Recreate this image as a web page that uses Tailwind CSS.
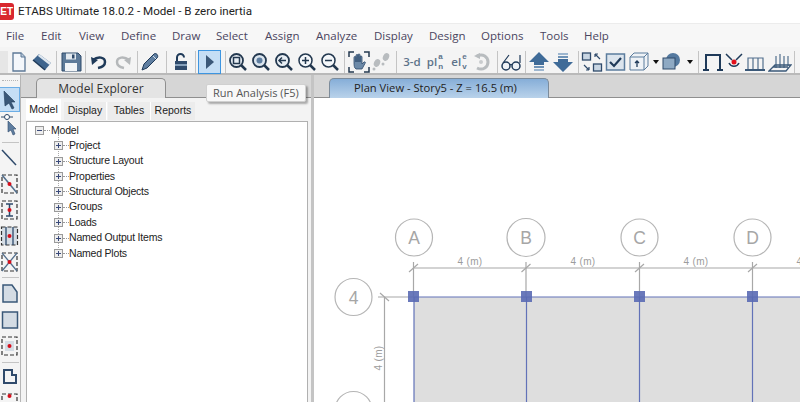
<!DOCTYPE html>
<html lang="en">
<head>
    <meta charset="UTF-8">
    <title>ETABS Ultimate 18.0.2</title>
    <script src="https://cdn.jsdelivr.net/npm/@tailwindcss/browser@4"></script>
</head>
<body class="w-[800px] h-[402px] overflow-hidden bg-white font-['Open_Sans',sans-serif] text-[#333]">
    <div class="relative flex flex-col h-[402px]">
        <!-- Title bar -->
        <div class="flex items-center h-[23px] bg-white shrink-0">
            <div class="flex items-center justify-end w-[14px] h-[17px] mr-[4px] pr-[1px] rounded-r-[3px] bg-[#d9272e] text-white text-[10px] font-bold font-['Liberation_Sans',sans-serif]">ET</div>
            <span class="text-[11.6px] text-[#222] leading-none font-['Roboto',sans-serif]">ETABS Ultimate 18.0.2 - Model - B zero inertia</span>
        </div>

        <!-- Menu bar -->
        <div class="flex items-center h-[24px] bg-[#f7f7f7] border-t border-[#ececec] shrink-0 text-[11.5px] text-[#4a4560]">
            <span class="ml-[6px] w-[35px]">File</span>
            <span class="w-[38px]">Edit</span>
            <span class="w-[42px]">View</span>
            <span class="w-[51px]">Define</span>
            <span class="w-[44px]">Draw</span>
            <span class="w-[49px]">Select</span>
            <span class="w-[51px]">Assign</span>
            <span class="w-[58px]">Analyze</span>
            <span class="w-[55px]">Display</span>
            <span class="w-[52px]">Design</span>
            <span class="w-[59px]">Options</span>
            <span class="w-[44px]">Tools</span>
            <span>Help</span>
        </div>

        <!-- Main toolbar -->
        <div class="flex items-center h-[28px] pt-[3px] bg-[#f4f4f4] border-b-2 border-[#b9b9b9] shrink-0">
            <div class="w-[8px] h-[22px] bg-[#e6e6e6]"></div>
            <svg class="w-[22px] h-[22px]" viewBox="0 0 22 22"><path d="M5 2h8l4 4v14H5z" fill="#f4f7fb" stroke="#5c7896" stroke-width="1.3"/><path d="M13 2v4h4" fill="#b9c9da" stroke="#5c7896"/></svg>
            <svg class="w-[22px] h-[22px] ml-[1px]" viewBox="0 0 22 22"><path d="M2 9l6-6 12 9-6 7z" fill="#3f658e"/><path d="M8 3l12 9-1.500 2L7 5z" fill="#dfe7ef"/><path d="M2 9l12 10" stroke="#1f3a59" stroke-width="1.500"/></svg>
            <div class="w-px h-[22px] bg-[#c4c4c4] ml-[3px]"></div>
            <svg class="w-[22px] h-[22px] ml-[3px]" viewBox="0 0 22 22"><path d="M2 2h16l3 3v15H2z" fill="#5d7a99" stroke="#2f4a6b"/><rect x="6" y="2.500" width="10" height="6" fill="#e4eaf0"/><rect x="12" y="3.500" width="2.500" height="4" fill="#2f4a6b"/><rect x="5" y="12" width="12" height="8" fill="#f1f4f7"/></svg>
            <div class="w-px h-[22px] bg-[#c4c4c4] ml-[3px]"></div>
            <svg class="w-[22px] h-[22px] ml-[2px]" viewBox="0 0 22 22"><path d="M5 9c5-4 12-3 12 2 0 3-2 5-7 6" fill="none" stroke="#1f3a59" stroke-width="2.500"/><path d="M3 6l1 8 6-5z" fill="#1f3a59"/></svg>
            <svg class="w-[22px] h-[22px] ml-[2px]" viewBox="0 0 22 22"><path d="M17 9c-5-4-12-3-12 2 0 3 2 5 7 6" fill="none" stroke="#b5b8ba" stroke-width="2.500"/><path d="M19 6l-1 8-6-5z" fill="#b5b8ba"/></svg>
            <div class="w-px h-[22px] bg-[#c4c4c4] ml-[3px]"></div>
            <svg class="w-[22px] h-[22px] ml-[1px]" viewBox="0 0 22 22"><path d="M3 19l2-6L15 3c2-1.500 4.500 1 3.500 3.500L8 17z" fill="#5f7ea0" stroke="#1f3a59"/><path d="M14 5l3 3" stroke="#d7e0ea"/></svg>
            <div class="w-px h-[22px] bg-[#c4c4c4] ml-[5px]"></div>
            <svg class="w-[22px] h-[22px] ml-[3px]" viewBox="0 0 22 22"><path d="M7 10V6.500a3.500 3.500 0 0 1 7 0" fill="none" stroke="#1f3a59" stroke-width="2"/><rect x="5" y="10" width="12" height="9" fill="#2f4a6b"/><rect x="5" y="13" width="12" height="2" fill="#86a0ba"/></svg>
            <div class="w-px h-[22px] bg-[#c4c4c4] ml-[3px]"></div>
            <div class="flex items-center justify-center w-[23px] h-[24px] ml-[2px] bg-[#c5def5] border border-[#3d95e0]">
                <svg class="w-[10px] h-[14px]" viewBox="0 0 10 14"><path d="M1 0l8 7-8 7z" fill="#3b5878"/></svg>
            </div>
            <div class="w-px h-[22px] bg-[#c4c4c4] ml-[4px]"></div>
            <svg class="w-[22px] h-[22px] ml-[1px]" viewBox="0 0 22 22"><circle cx="9.500" cy="9.500" r="6.500" fill="#e8eef4" stroke="#23384f" stroke-width="1.800"/><rect x="6.500" y="6.500" width="6" height="6" fill="none" stroke="#23384f" stroke-width="1.500"/><path d="M14 14l5 5" stroke="#23384f" stroke-width="2.500"/></svg>
            <svg class="w-[22px] h-[22px] ml-[1px]" viewBox="0 0 22 22"><circle cx="9.500" cy="9.500" r="6.500" fill="#dbe5ee" stroke="#23384f" stroke-width="1.800"/><circle cx="9.500" cy="9.500" r="3" fill="#5f7ea0"/><path d="M14 14l5 5" stroke="#23384f" stroke-width="2.500"/></svg>
            <svg class="w-[22px] h-[22px] ml-[1px]" viewBox="0 0 22 22"><circle cx="9.500" cy="9.500" r="6.500" fill="#e8eef4" stroke="#23384f" stroke-width="1.800"/><path d="M13 9.500H6M9 6.500l-3 3 3 3" fill="none" stroke="#23384f" stroke-width="1.500"/><path d="M14 14l5 5" stroke="#23384f" stroke-width="2.500"/></svg>
            <svg class="w-[22px] h-[22px] ml-[1px]" viewBox="0 0 22 22"><circle cx="9.500" cy="9.500" r="6.500" fill="#f4f7fa" stroke="#23384f" stroke-width="1.500"/><path d="M6 9.500h7M9.500 6v7" stroke="#23384f" stroke-width="1.500"/><path d="M14 14l5 5" stroke="#23384f" stroke-width="2.500"/></svg>
            <svg class="w-[22px] h-[22px] ml-[1px]" viewBox="0 0 22 22"><circle cx="9.500" cy="9.500" r="6.500" fill="#f4f7fa" stroke="#23384f" stroke-width="1.500"/><path d="M6 9.500h7" stroke="#23384f" stroke-width="1.500"/><path d="M14 14l5 5" stroke="#23384f" stroke-width="2.500"/></svg>
            <div class="w-px h-[22px] bg-[#c4c4c4] ml-[3px]"></div>
            <svg class="w-[22px] h-[22px] ml-[3px]" viewBox="0 0 22 22"><path d="M1 6V1h5M16 1h5v5M21 16v5h-5M6 21H1v-5" fill="none" stroke="#23384f" stroke-width="1.500"/><path d="M6 11V6.500a1 1 0 0 1 2 0V11V4.500a1 1 0 0 1 2 0V11V4a1 1 0 0 1 2 0v7V6a1 1 0 0 1 2 0v7l2-2c1-.5 2 .5 1 1.500L14 18H8c-2-1-2-4-2-7z" fill="#6d8aa8" stroke="#2f4a6b" stroke-width=".8"/></svg>
            <svg class="w-[22px] h-[22px]" viewBox="0 0 22 22"><ellipse cx="16" cy="6" rx="3" ry="4" fill="#b8bcbf" transform="rotate(25 16 6)"/><ellipse cx="7" cy="12" rx="3" ry="4" fill="#b8bcbf" transform="rotate(25 7 12)"/><circle cx="13" cy="13" r="1.500" fill="#b8bcbf"/><circle cx="4" cy="18" r="1.500" fill="#b8bcbf"/></svg>
            <div class="w-px h-[22px] bg-[#c4c4c4] ml-[4px]"></div>
            <span class="w-[22px] ml-[4px] text-center text-[11.5px] text-[#5d738a] font-semibold">3-d</span>
            <span class="flex items-center justify-center w-[24px] text-[11.5px] leading-none text-[#5d738a] font-semibold">pl<span class="flex flex-col ml-px font-['Liberation_Sans',sans-serif] text-[8px] leading-[9.5px]"><span>a</span><span>n</span></span></span>
            <span class="flex items-center justify-center w-[24px] text-[11.5px] leading-none text-[#5d738a] font-semibold">el<span class="flex flex-col ml-px font-['Liberation_Sans',sans-serif] text-[8px] leading-[9.5px]"><span>e</span><span>v</span></span></span>
            <svg class="w-[22px] h-[22px]" viewBox="0 0 22 22"><path d="M6 5c6-3 11 1 11 6s-5 9-11 6" fill="none" stroke="#b8bcbf" stroke-width="3"/><path d="M3 5l6-3v6z" fill="#b8bcbf"/><circle cx="10" cy="11" r="2" fill="#c9ccce"/></svg>
            <div class="w-px h-[22px] bg-[#c4c4c4] ml-[4px]"></div>
            <svg class="w-[22px] h-[22px] ml-[2px]" viewBox="0 0 22 22"><circle cx="6" cy="15" r="4" fill="#eef2f6" stroke="#1f3a59" stroke-width="1.500"/><circle cx="16" cy="15" r="4" fill="#eef2f6" stroke="#1f3a59" stroke-width="1.500"/><path d="M10 14c1-1 1-1 2 0M3 12L9 4M20 12V4" fill="none" stroke="#1f3a59" stroke-width="1.200"/></svg>
            <div class="w-px h-[22px] bg-[#c4c4c4] ml-[3px]"></div>
            <svg class="w-[24px] h-[22px] ml-[1px]" viewBox="0 0 24 22"><path d="M12 1l10 10h-5v3H7v-3H2z" fill="#3f6b98"/><rect x="7" y="15" width="10" height="2" fill="#6f93b7"/><rect x="7" y="18" width="10" height="2" fill="#9db6cf"/></svg>
            <svg class="w-[24px] h-[22px]" viewBox="0 0 24 22"><rect x="7" y="2" width="10" height="2" fill="#9db6cf"/><rect x="7" y="5" width="10" height="2" fill="#6f93b7"/><path d="M12 21L2 11h5V8h10v3h5z" fill="#3f6b98"/></svg>
            <div class="w-px h-[22px] bg-[#c4c4c4] ml-[3px]"></div>
            <svg class="w-[22px] h-[22px] ml-[2px]" viewBox="0 0 22 22"><rect x="1.500" y="2" width="8" height="7" fill="#c9d6e3" stroke="#2f4a6b" stroke-width="1.300"/><rect x="12.500" y="13" width="8" height="7" fill="#c9d6e3" stroke="#2f4a6b" stroke-width="1.300"/><path d="M14 3l5 5M14 3h3M14 3v3M8 19l-5-5M8 19H5M8 19v-3" fill="none" stroke="#2f4a6b" stroke-width="1.200"/></svg>
            <svg class="w-[22px] h-[22px] ml-[2px]" viewBox="0 0 22 22"><rect x="1.500" y="3" width="18" height="16" fill="#dbe4ed" stroke="#5b7c9d" stroke-width="1.500"/><path d="M5 11l4 4 7-8" fill="none" stroke="#1f3a59" stroke-width="2.200"/></svg>
            <svg class="w-[22px] h-[22px] ml-[1px]" viewBox="0 0 22 22"><path d="M2 6l4-4h14v13l-4 4H2z" fill="#eef2f6" stroke="#5b7c9d"/><path d="M2 6h14v13M16 6l4-4" fill="none" stroke="#5b7c9d"/><path d="M9 16v-6M7 12l2-2 2 2" fill="none" stroke="#1f3a59" stroke-width="1.300"/></svg>
            <svg class="w-[6px] h-[4px] ml-[3px]" viewBox="0 0 6 4"><path d="M0 0h6L3 4z" fill="#111"/></svg>
            <svg class="w-[22px] h-[22px] ml-[1px]" viewBox="0 0 22 22"><circle cx="13" cy="9" r="7" fill="#54799f"/><rect x="3" y="7" width="12" height="11" fill="#8ea9c3" stroke="#2f4a6b"/></svg>
            <svg class="w-[6px] h-[4px] ml-[5px]" viewBox="0 0 6 4"><path d="M0 0h6L3 4z" fill="#111"/></svg>
            <div class="w-px h-[22px] bg-[#c4c4c4] ml-[5px]"></div>
            <svg class="w-[22px] h-[22px] ml-[3px]" viewBox="0 0 22 22"><path d="M4 19V4h14v15" fill="none" stroke="#1f3a59" stroke-width="2"/><path d="M1 19h6M15 19h6" stroke="#1f3a59" stroke-width="2"/></svg>
            <svg class="w-[22px] h-[22px] -ml-px" viewBox="0 0 22 22"><path d="M3 3l6 6M19 3l-6 6" stroke="#1f3a59" stroke-width="1.500"/><path d="M6 12a5.500 5.500 0 0 0 10 0" fill="none" stroke="#1f3a59" stroke-width="1.500"/><circle cx="11" cy="11" r="2.500" fill="#e3101c"/></svg>
            <svg class="w-[22px] h-[22px] -ml-px" viewBox="0 0 22 22"><path d="M4 19V7h15v12M9 7v12M14 7v12" fill="none" stroke="#526f8d" stroke-width="1.200"/><path d="M1 19h20" stroke="#3a5878" stroke-width="2"/></svg>
            <svg class="w-[24px] h-[22px] ml-[2px]" viewBox="0 0 24 22"><path d="M8 17V5M12 17V3M16 17V5M20 15V5" stroke="#526f8d" stroke-width="1.200"/><path d="M1 20l6-6h16l-5 6zM5 16h15" fill="none" stroke="#3a5878" stroke-width="1.300"/></svg>
            <div class="w-px h-[22px] bg-[#c4c4c4] ml-[2px]"></div>
        </div>

        <div class="flex flex-1 min-h-0">
            <!-- Left toolbar -->
            <div class="flex flex-col items-center w-[21px] shrink-0 bg-[#f4f4f4] border-r border-[#b5b5b5] overflow-hidden">
                <div class="w-[16px] mt-[5px] border-t border-dotted border-[#b5b5b5] shrink-0"></div>
                <div class="flex items-center justify-center w-[20px] h-[25px] mt-[6px] shrink-0 bg-[#c5def5] border border-[#6caee6] border-l-0">
                    <svg class="w-[16px] h-[20px]" viewBox="0 0 16 20"><path d="M2 1l11 11H9l3 6-2 1-3-6-4 3z" fill="#3b5878" stroke="#1f3a59" stroke-width=".6"/></svg>
                </div>
                <svg class="w-[20px] h-[24px] mt-[1px] shrink-0" viewBox="0 0 20 24"><path d="M1 4h12M7 1v6" stroke="#2f4a6b"/><circle cx="7" cy="4" r="2.500" fill="#fff" stroke="#2f4a6b"/><path d="M8 8l8 8h-3l2 5-2 1-2-5-3 2z" fill="#5f7ea0" stroke="#2f4a6b" stroke-width=".6"/></svg>
                <div class="w-[17px] h-px mt-[5px] shrink-0 bg-[#c4c4c4]"></div>
                <svg class="w-[20px] h-[24px] mt-[3px] shrink-0" viewBox="0 0 20 24"><path d="M2 4l14 15" stroke="#2f4a6b" stroke-width="1.500"/></svg>
                <svg class="w-[20px] h-[24px] mt-[2px] shrink-0" viewBox="0 0 20 24"><rect x="2" y="3" width="15" height="18" fill="none" stroke="#333" stroke-dasharray="4 2" stroke-width="1.200"/><path d="M2 3l15 18" stroke="#526f8d" stroke-width="1.500"/><circle cx="9.500" cy="12" r="2" fill="#d60e1a"/></svg>
                <svg class="w-[20px] h-[24px] mt-[2px] shrink-0" viewBox="0 0 20 24"><rect x="2" y="3" width="15" height="18" fill="none" stroke="#333" stroke-dasharray="4 2" stroke-width="1.200"/><path d="M6 6h7M6 18h7M9.500 6v12" stroke="#2f4a6b" stroke-width="1.500"/><circle cx="9.500" cy="12" r="2" fill="#d60e1a"/></svg>
                <svg class="w-[20px] h-[24px] mt-[2px] shrink-0" viewBox="0 0 20 24"><rect x="1.500" y="3" width="16" height="18" fill="#d4dce4" stroke="#333" stroke-dasharray="4 2" stroke-width="1.200"/><path d="M6 3v18M13 3v18" stroke="#2f4a6b" stroke-width="1.300"/><circle cx="9.500" cy="12" r="2" fill="#d60e1a"/></svg>
                <svg class="w-[20px] h-[24px] mt-[2px] shrink-0" viewBox="0 0 20 24"><rect x="2" y="3" width="15" height="18" fill="none" stroke="#333" stroke-dasharray="4 2" stroke-width="1.200"/><path d="M2 3l15 18M17 3L2 21" stroke="#526f8d" stroke-width="1.300"/><circle cx="9.500" cy="12" r="2" fill="#d60e1a"/></svg>
                <div class="w-[17px] h-px mt-[3px] shrink-0 bg-[#c4c4c4]"></div>
                <svg class="w-[20px] h-[24px] mt-[4px] shrink-0" viewBox="0 0 20 24"><path d="M3 3h9l5 7v10H3z" fill="#d4dce4" stroke="#3a5878" stroke-width="1.500"/></svg>
                <svg class="w-[20px] h-[24px] mt-[2px] shrink-0" viewBox="0 0 20 24"><rect x="2.500" y="4" width="15" height="16" fill="#d4dce4" stroke="#3a5878" stroke-width="1.500"/></svg>
                <svg class="w-[20px] h-[24px] mt-[2px] shrink-0" viewBox="0 0 20 24"><rect x="2" y="3" width="15" height="18" fill="none" stroke="#333" stroke-dasharray="4 2" stroke-width="1.200"/><rect x="5" y="7" width="9" height="10" fill="#d4dce4"/><circle cx="9.500" cy="12" r="2" fill="#d60e1a"/></svg>
                <div class="w-[17px] h-px mt-[4px] shrink-0 bg-[#c4c4c4]"></div>
                <svg class="w-[20px] h-[24px] mt-[3px] shrink-0" viewBox="0 0 20 24"><path d="M4 17V4h8v5h4v8z" fill="none" stroke="#2f4a6b" stroke-width="2"/></svg>
                <svg class="w-[20px] h-[24px] shrink-0" viewBox="0 0 20 24"><rect x="2" y="4" width="15" height="18" fill="none" stroke="#333" stroke-dasharray="4 2" stroke-width="1.200"/><circle cx="9.500" cy="6" r="2" fill="#d60e1a"/></svg>
            </div>

            <!-- Model Explorer panel -->
            <div class="flex flex-col w-[293px] shrink-0 bg-[#f3f3f3] border-r-[3px] border-[#c4c4c4]">
                <div class="flex items-end h-[23px] pl-[15px] bg-[#d6d6d6] border-b border-[#8f8f8f]">
                    <div class="flex items-center justify-center w-[130px] h-[20px] -mb-px bg-[#e4e4e4] border border-b-0 border-[#8f8f8f] rounded-t-[5px] text-[12px] text-[#333]">Model Explorer</div>
                </div>
                <div class="flex items-end h-[23px] pl-[5px] pb-[1px] text-[10.5px] font-['Liberation_Sans',sans-serif] text-[#222]">
                    <div class="flex items-center justify-center w-[35px] h-[21px] bg-white">Model</div>
                    <div class="flex items-center justify-center w-[43px] h-[18px] ml-[3px] bg-[#ececec] border-r border-white">Display</div>
                    <div class="flex items-center justify-center w-[43px] h-[18px] ml-px bg-[#ececec] border-r border-white">Tables</div>
                    <div class="flex items-center justify-center w-[44px] h-[18px] bg-[#ececec]">Reports</div>
                </div>
                <div class="relative flex-1 ml-[5px] mr-[3px] pt-[1px] pl-[8px] bg-white border border-b-0 border-[#b0b0b0] font-['Liberation_Sans',sans-serif] text-[10.5px] tracking-[-0.2px] text-[#222]">
                    <span class="absolute left-[31px] top-[12px] h-[122px] border-l border-dotted border-[#aaa]"></span>
                    <div class="flex items-center h-[15px]">
                        <span class="flex items-center justify-center w-[9px] h-[9px] border border-[#9a9a9a] bg-[#eee]"><span class="w-[5px] h-px bg-[#3a4a7a]"></span></span>
                        <span class="w-[6px] border-t border-dotted border-[#999]"></span>
                        <span class="ml-[1px]">Model</span>
                    </div>
                    <ul class="ml-[19px]">
                        <li class="flex items-center h-[15.4px]"><span class="relative flex items-center justify-center w-[9px] h-[9px] border border-[#9a9a9a] bg-[#eee]"><span class="w-[5px] h-px bg-[#3a4a7a]"></span><span class="absolute w-px h-[5px] bg-[#3a4a7a]"></span></span><span class="w-[6px] border-t border-dotted border-[#999]"></span><span>Project</span></li>
                        <li class="flex items-center h-[15.4px]"><span class="relative flex items-center justify-center w-[9px] h-[9px] border border-[#9a9a9a] bg-[#eee]"><span class="w-[5px] h-px bg-[#3a4a7a]"></span><span class="absolute w-px h-[5px] bg-[#3a4a7a]"></span></span><span class="w-[6px] border-t border-dotted border-[#999]"></span><span>Structure Layout</span></li>
                        <li class="flex items-center h-[15.4px]"><span class="relative flex items-center justify-center w-[9px] h-[9px] border border-[#9a9a9a] bg-[#eee]"><span class="w-[5px] h-px bg-[#3a4a7a]"></span><span class="absolute w-px h-[5px] bg-[#3a4a7a]"></span></span><span class="w-[6px] border-t border-dotted border-[#999]"></span><span>Properties</span></li>
                        <li class="flex items-center h-[15.4px]"><span class="relative flex items-center justify-center w-[9px] h-[9px] border border-[#9a9a9a] bg-[#eee]"><span class="w-[5px] h-px bg-[#3a4a7a]"></span><span class="absolute w-px h-[5px] bg-[#3a4a7a]"></span></span><span class="w-[6px] border-t border-dotted border-[#999]"></span><span>Structural Objects</span></li>
                        <li class="flex items-center h-[15.4px]"><span class="relative flex items-center justify-center w-[9px] h-[9px] border border-[#9a9a9a] bg-[#eee]"><span class="w-[5px] h-px bg-[#3a4a7a]"></span><span class="absolute w-px h-[5px] bg-[#3a4a7a]"></span></span><span class="w-[6px] border-t border-dotted border-[#999]"></span><span>Groups</span></li>
                        <li class="flex items-center h-[15.4px]"><span class="relative flex items-center justify-center w-[9px] h-[9px] border border-[#9a9a9a] bg-[#eee]"><span class="w-[5px] h-px bg-[#3a4a7a]"></span><span class="absolute w-px h-[5px] bg-[#3a4a7a]"></span></span><span class="w-[6px] border-t border-dotted border-[#999]"></span><span>Loads</span></li>
                        <li class="flex items-center h-[15.4px]"><span class="relative flex items-center justify-center w-[9px] h-[9px] border border-[#9a9a9a] bg-[#eee]"><span class="w-[5px] h-px bg-[#3a4a7a]"></span><span class="absolute w-px h-[5px] bg-[#3a4a7a]"></span></span><span class="w-[6px] border-t border-dotted border-[#999]"></span><span>Named Output Items</span></li>
                        <li class="flex items-center h-[15.4px]"><span class="relative flex items-center justify-center w-[9px] h-[9px] border border-[#9a9a9a] bg-[#eee]"><span class="w-[5px] h-px bg-[#3a4a7a]"></span><span class="absolute w-px h-[5px] bg-[#3a4a7a]"></span></span><span class="w-[6px] border-t border-dotted border-[#999]"></span><span>Named Plots</span></li>
                    </ul>
                </div>
            </div>

            <!-- Plan view -->
            <div class="flex flex-col flex-1 min-w-0">
                <div class="flex items-end h-[23px] shrink-0 pl-[15px] bg-[#d6d6d6] border-b border-[#8f8f8f]">
                    <div class="flex items-center justify-center w-[220px] h-[20px] pr-[7px] -mb-px bg-gradient-to-b from-[#86aed8] to-[#b9d2ea] border border-b-0 border-[#7c8b9a] rounded-t-[5px] text-[11.2px] text-[#222]">Plan View - Story5 - Z = 16.5 (m)</div>
                </div>
                <svg class="flex-1 w-full min-h-0 bg-white" viewBox="314 98 486 304" font-family="Liberation Sans, sans-serif">
                    <rect x="414" y="297" width="386" height="105" fill="#dedede"/>
                    <g fill="none" stroke="#b5b5b5" stroke-width="1.200">
                        <circle cx="414" cy="237.500" r="18.500"/><circle cx="526" cy="237.500" r="19"/><circle cx="639.500" cy="237.500" r="18.500"/><circle cx="752.500" cy="237.500" r="18.500"/>
                        <circle cx="353.500" cy="297" r="18.500"/><circle cx="353.500" cy="410" r="18.500"/>
                    </g>
                    <g stroke="#a8a8a8" stroke-width="1.200" fill="none">
                        <path d="M413.500 268H800M384.500 297V402M378 297H414"/>
                        <path d="M413.500 262V297M526 262V297M639.500 262V297M752.500 262V297"/>
                        <path d="M409 272l9-8M521.500 272l9-8M635 272l9-8M748 272l9-8M380 293l9 8"/>
                    </g>
                    <g fill="#a6a6a6" font-size="17.500" text-anchor="middle">
                        <text x="414" y="244">A</text><text x="526" y="244">B</text><text x="639.500" y="244">C</text><text x="752.500" y="244">D</text><text x="353.500" y="303.500">4</text>
                    </g>
                    <g fill="#9c9c9c" font-size="10" text-anchor="middle" letter-spacing=".3">
                        <text x="470" y="265">4 (m)</text><text x="583" y="265">4 (m)</text><text x="696" y="265">4 (m)</text><text x="809" y="265">4 (m)</text>
                        <text transform="translate(382 358) rotate(-90)">4 (m)</text>
                    </g>
                    <g stroke="#6272b8" stroke-width="1.200" fill="none">
                        <path d="M414 297H800M414 297V402M526.500 297V402M639.500 297V402M752.500 297V402"/>
                    </g>
                    <g fill="#5a6ab4" fill-opacity=".9">
                        <rect x="408" y="291" width="11" height="11"/><rect x="521" y="291" width="11" height="11"/><rect x="634" y="291" width="11" height="11"/><rect x="747" y="291" width="11" height="11"/>
                    </g>
                </svg>
            </div>
        </div>

        <!-- Tooltip over the panel -->
        <div class="absolute left-[206px] top-[84px] flex items-center h-[18px] px-[6px] bg-[#f8f8f8] border border-[#d0d0d0] rounded-[2px] shadow-[2px_2px_2px_rgba(0,0,0,0.3)] text-[11px] text-[#555]">Run Analysis (F5)</div>
    </div>
</body>
</html>
